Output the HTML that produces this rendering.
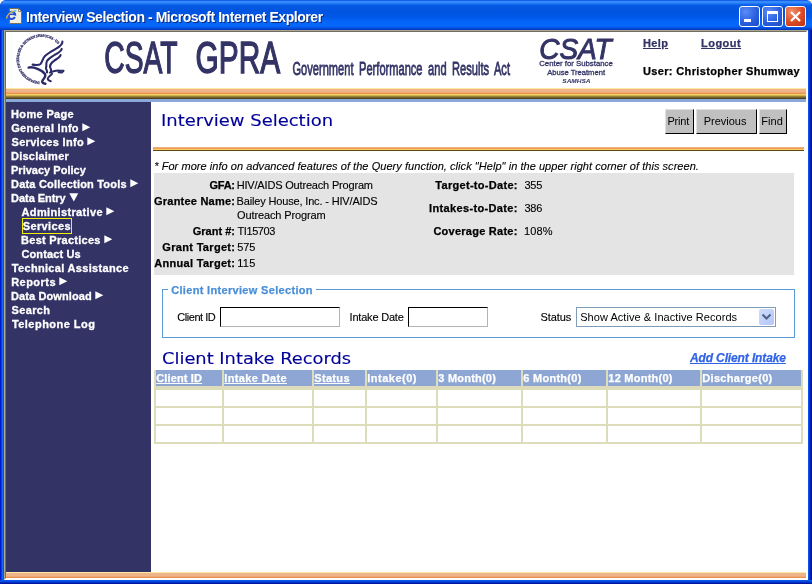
<!DOCTYPE html>
<html lang="en">
<head>
<meta charset="utf-8">
<title>Interview Selection - Microsoft Internet Explorer</title>
<style>
html,body{margin:0;padding:0;}
body{width:812px;height:584px;overflow:hidden;position:relative;background:#fff;font-family:"Liberation Sans",Arial,sans-serif;font-size:11px;color:#000;}
.abs{position:absolute;}
#win{will-change:transform;position:absolute;left:0;top:0;width:812px;height:584px;background:linear-gradient(to right,#0019cf 0,#0019cf 1px,#0a3ce0 1px,#0a3ce0 2px,#166aee 2px,#166aee 3px,#0855dd 3px,#0855dd 4px,#0650e0 4px,#0650e0 808px,#0a50e8 808px,#0a50e8 809px,#0438d0 809px,#0438d0 810px,#001eb0 810px,#001eb0 811px,#00138c 811px,#00138c 812px);overflow:hidden;border-radius:6px 6px 0 0;}
#titlebar{position:absolute;left:0;top:0;width:812px;height:30px;border-radius:6px 6px 0 0;background:linear-gradient(to bottom,#0043cf 0,#2c7eff 1px,#3d95ff 2px,#2a80f8 3px,#1068f0 4.5px,#0458e0 6px,#0054e0 12px,#0058e8 17px,#0466fa 22px,#0466fa 26px,#0350e0 28px,#0232b8 30px);}
#title{position:absolute;left:27px;top:9px;font:bold 14px/16px "Liberation Sans",sans-serif;color:#fff;text-shadow:1px 1px 0 #0a2a80;white-space:nowrap;}
#client{position:absolute;left:4px;top:30px;width:804px;height:550px;background:#fff;}
.t{position:absolute;white-space:nowrap;line-height:14px;-webkit-text-stroke:0.12px currentColor;}
.b{font-weight:bold;-webkit-text-stroke:0.25px currentColor;}
#side{position:absolute;left:6px;top:102px;width:145px;height:470px;background:#333366;}
.m{-webkit-text-stroke:0.3px #fff;position:absolute;color:#fff;font-weight:bold;font-size:11px;line-height:14px;white-space:nowrap;}
.wb{position:absolute;top:6px;width:21px;height:21px;box-sizing:border-box;border:1px solid #fff;border-radius:3px;background:radial-gradient(circle at 30% 25%,#5a8cf4 0%,#2b60e0 55%,#1c48c4 100%);overflow:hidden;}
.wb svg{position:absolute;left:-1px;top:-1px;}
.wbx{background:radial-gradient(circle at 30% 25%,#f0906c 0%,#dc4a24 55%,#b83010 100%);}
#frame{position:absolute;left:4px;top:30px;width:804px;height:550px;box-sizing:border-box;border:1px solid;border-color:#aca890 #fffff0 #fff #aca890;pointer-events:none;}
#frame::after{content:"";position:absolute;left:0;top:0;right:0;bottom:0;border:1px solid;border-color:#716f64 #fff #fff #716f64;}
#bands{position:absolute;left:6px;top:88px;width:800px;height:11px;background:linear-gradient(to bottom,#fdeaa0 0,#fdeaa0 1px,#f0b48a 1px,#f0b48a 4px,#ee9a5c 5px,#e8894a 6px,#f5d060 6px,#f5d060 7px,#a89040 8px,#6a5424 10px,#3a2c10 11px);}
#bluebar{position:absolute;left:6px;top:99px;width:800px;height:3px;background:#8aa8d8;}
#botband{position:absolute;left:6px;top:572px;width:800px;height:6px;background:linear-gradient(to bottom,#fdeaa0 0,#fdeaa0 1px,#f0b48a 1px,#f0b48a 4px,#ee9a5c 5px,#e8894a 6px);}
#selbox-y{position:absolute;left:22px;top:218px;width:50px;height:16px;box-sizing:border-box;border:1px solid #f0f000;}
.h1{transform-origin:0 50%;font-family:"DejaVu Sans",Verdana,sans-serif;font-size:16px;line-height:22px;color:#000099;}
.i{font-style:italic;}
.btn{position:absolute;top:109px;height:25px;box-sizing:border-box;background:#c0c0c0;border:1px solid;border-color:#e0e0e0 #000 #000 #e0e0e0;text-align:center;font-size:11px;line-height:22px;color:#000;white-space:nowrap;}
#oline{position:absolute;left:153px;top:147px;width:651px;height:4px;background:linear-gradient(to bottom,#f2ae80 0,#f2ae80 1px,#ee9a5c 1px,#ee9a5c 2px,#f8d060 2px,#f8d060 3px,#5a4a10 3px,#5a4a10 4px);}
#info{position:absolute;left:154px;top:173px;width:640px;height:102px;background:#e4e4e4;}
#fs{position:absolute;left:162px;top:289px;width:633px;height:49px;box-sizing:border-box;border:1px solid #5b9bd5;}
#legend{color:#4a8fd8;background:#fff;padding:0 3px;margin-left:-3px;}
.inp{position:absolute;top:307px;height:20px;box-sizing:border-box;background:#fff;border:1px solid;border-color:#000 #b4b4b4 #b4b4b4 #000;}
#selbox{position:absolute;left:576px;top:307px;width:200px;height:20px;box-sizing:border-box;border:1px solid #7f9db9;background:#fff;font-size:11px;line-height:14px;white-space:nowrap;}
#selbox span{position:absolute;left:3.2px;top:2px;}
#selbtn{position:absolute;right:1px;top:1px;width:15px;height:16px;border-radius:2px;background:linear-gradient(135deg,#d0dcfc,#b4c6f6);}
#addlink{color:#3264e6;text-decoration:underline;font-size:12px;}
#tbl{position:absolute;left:154px;top:370px;width:649px;height:74px;background:#ddddbb;display:grid;box-sizing:border-box;padding:0 2px 2px 2px;grid-template-columns:66px 88px 51px 69px 83px 83px 92px 99px;grid-template-rows:18px 16px 16px 16px;column-gap:2px;row-gap:2px;}
#tbl .th{-webkit-text-stroke:0.25px #fff;box-sizing:border-box;border-bottom:2px solid #ddddbb;background:#8ea6d3;color:#fff;font-weight:bold;font-size:11px;line-height:16px;padding-left:0.3px;white-space:nowrap;overflow:hidden;}
#tbl .td{background:#fff;}
.lnk{color:#333366;text-decoration:underline;}
#botedge{position:absolute;left:0;top:580px;width:812px;height:4px;background:linear-gradient(to bottom,#0a5eea 0,#0440d8 2px,#0019b0 3px,#00138c 4px);}
#crn{position:absolute;left:802px;top:0;width:10px;height:10px;background:#efecd8;}
</style>
</head>
<body>
<div id="crn"></div>
<div id="win">
  <div id="titlebar"></div>
  <div id="corner-l"></div><div id="corner-r"></div>
  <!-- IE page icon -->
  <svg class="abs" style="left:4px;top:6px" width="20" height="20" viewBox="0 0 20 20">
    <path d="M5.5 2.5 H14.5 L17.5 5.5 V17.5 H5.5 Z" fill="#f1efe2" stroke="#7a705a" stroke-width="1"/>
    <path d="M14.5 2.5 V5.5 H17.5 Z" fill="#fff" stroke="#7a705a" stroke-width="0.8"/>
    <g transform="translate(-0.3,-1.5)"><path d="M11.6 11.2 A3.6 3.6 0 1 0 11.2 12.6" fill="none" stroke="#1c50d8" stroke-width="2.1"/>
    <rect x="5" y="9.1" width="7" height="1.5" fill="#1c50d8"/></g>
    <g transform="translate(0,-1)"><path d="M2.6 13.6 C3 9.6 6.4 6 11.4 6.4" fill="none" stroke="#e8c040" stroke-width="1.1"/>
    <path d="M9.2 6.2 L12.4 5.6" stroke="#30c8f0" stroke-width="1.2"/></g>
  </svg>
  <div id="title" style="left:26.0px;letter-spacing:-0.438px">Interview Selection - Microsoft Internet Explorer</div>
  <!-- window buttons -->
  <div class="wb" style="left:739px"><svg width="21" height="21" viewBox="0 0 21 21"><rect x="5" y="13" width="7" height="3" fill="#fff"/></svg></div>
  <div class="wb" style="left:762px"><svg width="21" height="21" viewBox="0 0 21 21"><rect x="5.5" y="6.5" width="10" height="9" fill="none" stroke="#fff" stroke-width="1"/><rect x="5" y="5" width="11" height="3" fill="#fff"/></svg></div>
  <div class="wb wbx" style="left:785px"><svg width="21" height="21" viewBox="0 0 21 21"><path d="M6 6 L15 15 M15 6 L6 15" stroke="#fff" stroke-width="2.2" fill="none"/></svg></div>

  <div id="client"></div>
  <div id="frame"></div>

  <!-- header -->
  <!-- HHS logo -->
  <svg class="abs" style="left:8px;top:32px" width="64" height="56" viewBox="8 32 64 56">
    <defs><path id="arc" d="M 39.6 81.6 A 22.4 22.4 0 1 1 58.2 44.4"/></defs>
    <text font-family="'Liberation Serif',serif" font-size="3.7" font-weight="bold" fill="#2b2b66" stroke="#2b2b66" stroke-width="0.22" letter-spacing="-0.19"><textPath href="#arc">DEPARTMENT OF HEALTH &amp; HUMAN SERVICES · USA</textPath></text>
    <g fill="none" stroke="#2b2b66" stroke-linecap="round" stroke-linejoin="round">
      <path d="M62.4 41.6 C62.8 45 59 47 55.7 48.9 C52 51 48 53 45 56 C42.5 58.5 42.5 62 40.5 64 C38.5 65.5 35 65 32.6 64.6" stroke-width="2.1"/>
      <path d="M61.7 48.9 C61 51.5 57 53.5 54.5 55 C51.5 57 48.5 58.5 47 61 C45.5 63.5 47 65.5 46 67.5 C45.4 69 47.6 70 47 72.4" stroke-width="2.1"/>
      <path d="M60.6 55 C60 57.5 56.5 59 54 60.8 C51.5 62.5 50 64.5 50 66.5 C50 68 51.6 69 51 71.2" stroke-width="2.1"/>
      <path d="M28.6 67.6 C31 66.8 34.5 67.6 37.5 68.8 C40.5 70 43.5 71.8 45 74 C46 76 44.8 77.6 43.6 79 C42.4 80.4 41.6 81.6 42.6 82.6 C43.4 83.4 44.4 83.6 45.4 83.8" stroke-width="2.4"/>
      <path d="M49.8 72.6 C53 71.2 56 70.4 59.4 70.6 L63.6 70.8 L61.8 72.6 L58.6 72.4" stroke-width="1.9"/>
      <path d="M52 73.8 C50.5 75.5 48 77 47.8 78.6 C47.7 80 49.4 80.8 50.8 81.2" stroke-width="2.0"/>
    </g>
  </svg>

  <svg class="abs" style="left:100px;top:34px" width="420" height="54" viewBox="100 34 420 54">
    <g font-family="'Liberation Sans',sans-serif" font-weight="bold" fill="#333366">
      <text x="104.3" y="73.2" font-size="43.5" font-weight="normal" stroke="#333366" stroke-width="1.4" textLength="73.3" lengthAdjust="spacingAndGlyphs">CSAT</text>
      <text x="195.6" y="73.2" font-size="43.5" font-weight="normal" stroke="#333366" stroke-width="1.4" textLength="84.6" lengthAdjust="spacingAndGlyphs">GPRA</text>
      <text x="292.5" y="74.5" font-size="19" font-weight="normal" stroke="#333366" stroke-width="0.8" word-spacing="4.2" textLength="217.5" lengthAdjust="spacingAndGlyphs">Government Performance and Results Act</text>
    </g>
  </svg>
  <svg class="abs" style="left:532px;top:34px" width="92" height="54" viewBox="532 34 92 54">
    <g font-family="'Liberation Sans',sans-serif" fill="#333366">
      <text x="539.2" y="59.3" font-size="30" font-style="italic" stroke="#333366" stroke-width="1.0" textLength="72.5" lengthAdjust="spacingAndGlyphs">CSAT</text>
      <text x="539.2" y="66.2" font-size="7.6" stroke="#333366" stroke-width="0.3" textLength="73.6" lengthAdjust="spacingAndGlyphs">Center for Substance</text>
      <text x="547.2" y="75.3" font-size="7.6" stroke="#333366" stroke-width="0.3" textLength="57.8" lengthAdjust="spacingAndGlyphs">Abuse Treatment</text>
      <text x="562.3" y="82.6" font-size="6" font-weight="bold" font-style="italic" textLength="28.3" lengthAdjust="spacingAndGlyphs">SAMHSA</text>
    </g>
  </svg>
  <div class="t b lnk" style="left:642.98px;top:36px;letter-spacing:0.35px;">Help</div>
  <div class="t b lnk" style="left:701.08px;top:36px;letter-spacing:0.46px;">Logout</div>
  <div class="t b" style="left:642.92px;top:64px;letter-spacing:0.362px;">User: Christopher Shumway</div>
  <div id="bands"></div>
  <div id="bluebar"></div>

  <div id="side"></div>
  <div id="menu">
    <div class="m" style="left:11.05px;top:107px;letter-spacing:0.344px">Home Page</div>
    <div class="m" style="left:11.25px;top:121px;letter-spacing:0.286px">General Info</div><svg class="abs" style="left:82.4px;top:123px" width="9" height="9" viewBox="0 0 9 9"><path d="M0.3 0.3 L8.3 4.3 L0.3 8.3 Z" fill="#fff"/></svg>
    <div class="m" style="left:11.5px;top:135px;letter-spacing:0.304px">Services Info</div><svg class="abs" style="left:87.4px;top:137px" width="9" height="9" viewBox="0 0 9 9"><path d="M0.3 0.3 L8.3 4.3 L0.3 8.3 Z" fill="#fff"/></svg>
    <div class="m" style="left:11.07px;top:149px;letter-spacing:0.228px">Disclaimer</div>
    <div class="m" style="left:11.0px;top:163px;letter-spacing:0.012px">Privacy Policy</div>
    <div class="m" style="left:11.07px;top:177px;letter-spacing:0.19px">Data Collection Tools</div><svg class="abs" style="left:130.3px;top:179px" width="9" height="9" viewBox="0 0 9 9"><path d="M0.3 0.3 L8.3 4.3 L0.3 8.3 Z" fill="#fff"/></svg>
    <div class="m" style="left:11.07px;top:191px;letter-spacing:-0.05px">Data Entry</div><svg class="abs" style="left:69.0px;top:193px" width="10" height="9" viewBox="0 0 10 9"><path d="M0.3 0.3 L9.3 0.3 L4.8 8.4 Z" fill="#fff"/></svg>
    <div class="m" style="left:21.57px;top:205px;letter-spacing:0.35px">Administrative</div><svg class="abs" style="left:106.3px;top:207px" width="9" height="9" viewBox="0 0 9 9"><path d="M0.3 0.3 L8.3 4.3 L0.3 8.3 Z" fill="#fff"/></svg>
    <div class="m" style="left:22.73px;top:219px;letter-spacing:0.386px">Services</div>
    <div class="m" style="left:21.07px;top:233px;letter-spacing:0.273px">Best Practices</div><svg class="abs" style="left:104.3px;top:235px" width="9" height="9" viewBox="0 0 9 9"><path d="M0.3 0.3 L8.3 4.3 L0.3 8.3 Z" fill="#fff"/></svg>
    <div class="m" style="left:21.38px;top:247px;letter-spacing:0.128px">Contact Us</div>
    <div class="m" style="left:11.82px;top:261px;letter-spacing:0.318px">Technical Assistance</div>
    <div class="m" style="left:11.13px;top:275px;letter-spacing:0.483px">Reports</div><svg class="abs" style="left:59.4px;top:277px" width="9" height="9" viewBox="0 0 9 9"><path d="M0.3 0.3 L8.3 4.3 L0.3 8.3 Z" fill="#fff"/></svg>
    <div class="m" style="left:11.03px;top:289px;letter-spacing:0.1px">Data Download</div><svg class="abs" style="left:95.2px;top:291px" width="9" height="9" viewBox="0 0 9 9"><path d="M0.3 0.3 L8.3 4.3 L0.3 8.3 Z" fill="#fff"/></svg>
    <div class="m" style="left:11.55px;top:303px;letter-spacing:0.35px">Search</div>
    <div class="m" style="left:11.88px;top:317px;letter-spacing:0.471px">Telephone Log</div>
    <div id="selbox-y"></div>
  </div>

  <!-- main content -->
  <div class="t h1" style="left:161.32px;top:109.6px;letter-spacing:0px;transform:scaleX(1.1228);">Interview Selection</div>
  <div class="btn" style="left:665px;width:29px"><span style="letter-spacing:-0.175px;position:absolute;top:0;left:1.40px;">Print</span></div>
  <div class="btn" style="left:696px;width:61px"><span style="letter-spacing:0.0px;position:absolute;top:0;left:6.70px;">Previous</span></div>
  <div class="btn" style="left:759px;width:28px"><span style="letter-spacing:0.05px;position:absolute;top:0;left:1.35px;">Find</span></div>
  <div id="oline"></div>
  <div class="t i" style="left:154.25px;top:159px;letter-spacing:0.049px;">* For more info on advanced features of the Query function, click &quot;Help&quot; in the upper right corner of this screen.</div>
  <div id="info"></div>
  <div class="t b" style="left:209.5px;top:178px;letter-spacing:-0.25px;">GFA:</div><div class="t" style="left:236.7px;top:178px;letter-spacing:-0.179px;">HIV/AIDS Outreach Program</div>
  <div class="t b" style="left:154.05px;top:194px;letter-spacing:0.221px;">Grantee Name:</div><div class="t" style="left:236.52px;top:194px;letter-spacing:-0.157px;">Bailey House, Inc. - HIV/AIDS</div><div class="t" style="left:237.12px;top:208px;letter-spacing:-0.13px;">Outreach Program</div>
  <div class="t b" style="left:192.68px;top:224px;letter-spacing:0.021px;">Grant #:</div><div class="t" style="left:237.43px;top:224px;letter-spacing:-0.392px;">TI15703</div>
  <div class="t b" style="left:162.32px;top:240px;letter-spacing:0.321px;">Grant Target:</div><div class="t" style="left:237.18px;top:240px;letter-spacing:-0.05px;">575</div>
  <div class="t b" style="left:154.3px;top:256px;letter-spacing:0.3px;">Annual Target:</div><div class="t" style="left:237.25px;top:256px;letter-spacing:0.25px;">115</div>
  <div class="t b" style="left:435.35px;top:178px;letter-spacing:0.293px;">Target-to-Date:</div><div class="t" style="left:524.4px;top:178px;letter-spacing:-0.25px;">355</div>
  <div class="t b" style="left:428.98px;top:201px;letter-spacing:0.357px;">Intakes-to-Date:</div><div class="t" style="left:524.4px;top:201px;letter-spacing:-0.25px;">386</div>
  <div class="t b" style="left:433.4px;top:224px;letter-spacing:0.25px;">Coverage Rate:</div><div class="t" style="left:524.12px;top:224px;letter-spacing:0.067px;">108%</div>

  <div id="fs"></div>
  <div class="t b" id="legend" style="left:171.22px;top:283px;letter-spacing:0.322px;">Client Interview Selection</div>
  <div class="t" style="left:177.25px;top:310px;letter-spacing:-0.456px;">Client ID</div>
  <div class="inp" style="left:220px;width:120px"></div>
  <div class="t" style="left:349.58px;top:310px;letter-spacing:-0.205px;">Intake Date</div>
  <div class="inp" style="left:408px;width:80px"></div>
  <div class="t" style="left:540.6px;top:310px;letter-spacing:-0.09px;">Status</div>
  <div id="selbox"><span style="letter-spacing:0.055px;">Show Active &amp; Inactive Records</span><div id="selbtn"><svg width="15" height="16" viewBox="0 0 15 16"><path d="M3.5 5.5 L7.5 9.5 L11.5 5.5" fill="none" stroke="#4d6185" stroke-width="2"/></svg></div></div>

  <div class="t h1" style="left:162.16px;top:348px;letter-spacing:0px;transform:scaleX(1.1155);">Client Intake Records</div>
  <div class="t b i" id="addlink" style="left:689.95px;top:351px;letter-spacing:-0.125px;">Add Client Intake</div>

  <div id="tbl">
    <div class="th"><u style="letter-spacing:0.131px;">Client ID</u></div><div class="th"><u style="letter-spacing:0.36px;">Intake Date</u></div><div class="th"><u style="letter-spacing:0.32px;">Status</u></div><div class="th"><span style="letter-spacing:0.488px;">Intake(0)</span></div><div class="th"><span style="letter-spacing:0.217px;">3 Month(0)</span></div><div class="th"><span style="letter-spacing:0.267px;">6 Month(0)</span></div><div class="th"><span style="letter-spacing:0.25px;">12 Month(0)</span></div><div class="th"><span style="letter-spacing:0.3px;">Discharge(0)</span></div>
    <div class="td"></div><div class="td"></div><div class="td"></div><div class="td"></div><div class="td"></div><div class="td"></div><div class="td"></div><div class="td"></div>
    <div class="td"></div><div class="td"></div><div class="td"></div><div class="td"></div><div class="td"></div><div class="td"></div><div class="td"></div><div class="td"></div>
    <div class="td"></div><div class="td"></div><div class="td"></div><div class="td"></div><div class="td"></div><div class="td"></div><div class="td"></div><div class="td"></div>
  </div>
  <div id="botband"></div>
  <div id="botedge"></div>
</div>
</body>
</html>
